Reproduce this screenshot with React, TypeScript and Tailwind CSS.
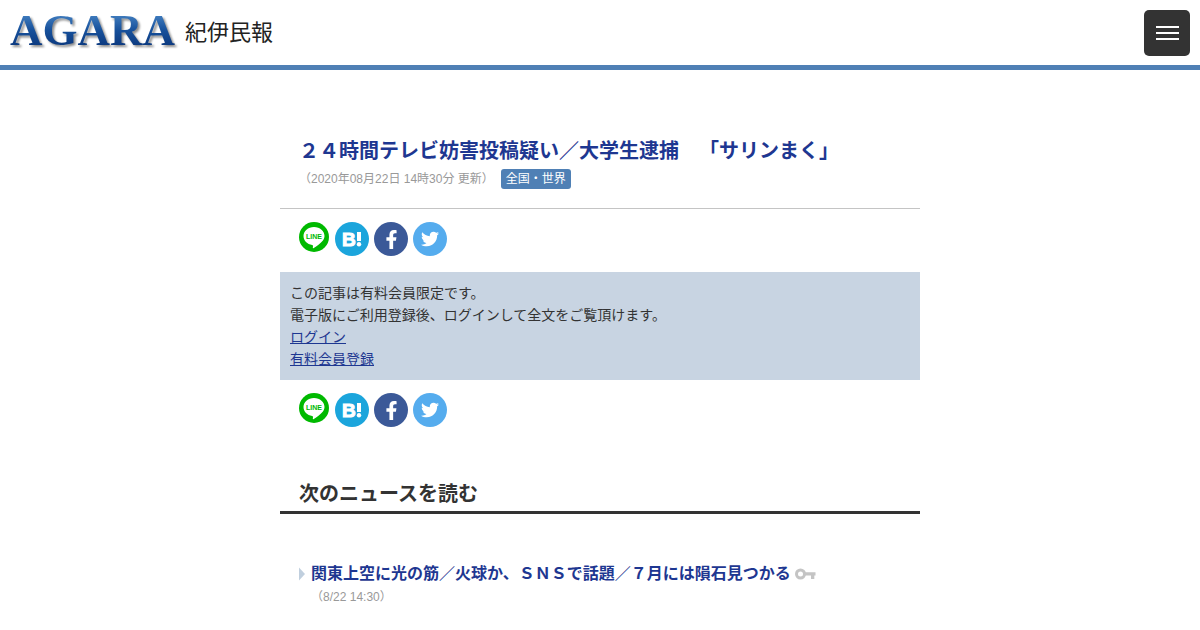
import React from 'react';
import { FaFacebookF, FaTwitter } from 'react-icons/fa';

const LineIcon = () => (
  <svg viewBox="0 0 30 30" className="size-[30px]" aria-hidden="true">
    <circle cx="15" cy="15" r="15" fill="#00b900" />
    <path
      d="M15 5C9 5 4.500 9 4.500 14c0 4.600 3.800 8.200 8.600 9 .8.2 1 .5.900 1.200l-.2 1.300c0 .6.3.9 1 .5 3-1.500 6.600-4.400 8.900-7.200 1.100-1.400 1.800-3 1.800-4.800 0-5-4.500-9-10.500-9z"
      fill="#fff"
    />
    <text x="15" y="16.500" textAnchor="middle" fontSize="7" fontWeight="700" fill="#00b900" fontFamily="Liberation Sans, sans-serif">
      LINE
    </text>
  </svg>
);

const HatenaIcon = () => (
  <svg viewBox="0 0 34 34" className="size-[34px]" aria-hidden="true">
    <circle cx="17" cy="17" r="17" fill="#1ba5dc" />
    <text x="7" y="24" fontSize="19" fontWeight="700" fill="#fff" stroke="#fff" strokeWidth="1" fontFamily="Liberation Sans, sans-serif">
      B
    </text>
    <rect x="22" y="10" width="4" height="9" fill="#fff" />
    <circle cx="24" cy="22.200" r="2.200" fill="#fff" />
  </svg>
);

const KeyIcon = () => (
  <svg viewBox="0 0 21 12" className="h-3 w-[21px] shrink-0" role="img" aria-label="有料会員限定">
    <circle cx="5.500" cy="6" r="4" fill="none" stroke="#c4c4c4" strokeWidth="3" />
    <path d="M10 4.300h10.500v3.200h-1.200v3.500h-3.300V7.500H10z" fill="#c4c4c4" />
  </svg>
);

const ShareButtons = () => (
  <ul className="flex items-start gap-[5px] px-[19px]">
    <li className="mr-px">
      <a href="#line" aria-label="LINEで送る" className="block">
        <LineIcon />
      </a>
    </li>
    <li>
      <a href="#hatena" aria-label="はてなブックマーク" className="block">
        <HatenaIcon />
      </a>
    </li>
    <li>
      <a href="#facebook" aria-label="Facebookでシェア" className="flex size-[34px] items-center justify-center rounded-full bg-[#3b5998] text-white">
        <FaFacebookF size={19} />
      </a>
    </li>
    <li>
      <a href="#twitter" aria-label="Twitterでシェア" className="flex size-[34px] items-center justify-center rounded-full bg-[#55acee] text-white">
        <FaTwitter size={18} />
      </a>
    </li>
  </ul>
);

const newsList = [
  { title: '関東上空に光の筋／火球か、ＳＮＳで話題／７月には隕石見つかる', date: '8/22 14:30', locked: true },
];

export default function App() {
  return (
    <div className="bg-white font-['Liberation_Sans','Noto_Sans_CJK_JP',sans-serif] text-sm text-[#333] [text-spacing-trim:space-all]">
      {/* Header */}
      <header className="flex items-start justify-between border-b-[5px] border-[#4f80b5] px-2.5 pt-2.5 pb-[9px]">
        <a href="/" className="flex items-start gap-2.5">
          <span className="bg-linear-to-b from-[#4d8bc9] via-[#17519c] to-[#0a3478] bg-clip-text font-['Liberation_Serif',serif] text-[45px] leading-10 font-bold text-transparent drop-shadow-[2px_2px_1px_rgba(0,0,0,0.45)]">
            AGARA
          </span>
          <span className="text-[22px] leading-[46px] text-[#222]">紀伊民報</span>
        </a>
        <button type="button" aria-label="メニュー" className="flex size-[46px] flex-col items-center justify-center gap-1 rounded-[5px] bg-[#333]">
          <span className="h-0.5 w-[23px] bg-white" />
          <span className="h-0.5 w-[23px] bg-white" />
          <span className="h-0.5 w-[23px] bg-white" />
        </button>
      </header>

      <main className="mx-auto max-w-[640px] pt-16">
        {/* Article */}
        <article>
          <div className="border-b border-[#c4c4c4] px-[19px] pb-[19px]">
            <h1 className="pt-px text-xl leading-8 font-bold text-[#1e3791]">２４時間テレビ妨害投稿疑い／大学生逮捕　「サリンまく」</h1>
            <div className="mt-0.5 flex items-center gap-[7px] text-xs leading-5">
              <time className="text-[#999]">（2020年08月22日 14時30分 更新）</time>
              <a href="#world" className="rounded-[3px] bg-[#4f80b5] px-[5px] text-white">全国・世界</a>
            </div>
          </div>

          <div className="pt-[13px] pb-4">
            <ShareButtons />
          </div>

          <div className="bg-[#c8d4e2] p-2.5 leading-[22px]">
            <p>この記事は有料会員限定です。</p>
            <p>電子版にご利用登録後、ログインして全文をご覧頂けます。</p>
            <p>
              <a href="#login" className="text-[#1e3791] underline">ログイン</a>
            </p>
            <p>
              <a href="#register" className="text-[#1e3791] underline">有料会員登録</a>
            </p>
          </div>

          <div className="pt-[13px]">
            <ShareButtons />
          </div>
        </article>

        {/* Next news */}
        <section className="pt-[51px]">
          <h2 className="border-b-[3px] border-[#333] px-[19px] pb-px text-xl leading-8 font-bold">次のニュースを読む</h2>
          <ul className="px-[19px] pt-12">
            {newsList.map((news) => (
              <li key={news.title} className="flex items-start">
                <svg viewBox="0 0 12 24" className="h-6 w-3 shrink-0" aria-hidden="true">
                  <path d="M0 5.500l6 6.500-6 6.500z" fill="#c0cfde" />
                </svg>
                <div>
                  <a href="#news" className="flex items-center gap-1 text-base leading-6 font-bold text-[#1e3791]">
                    {news.title}
                    {news.locked && <KeyIcon />}
                  </a>
                  <time className="block text-xs leading-[22px] text-[#999]">（{news.date}）</time>
                </div>
              </li>
            ))}
          </ul>
        </section>
      </main>
    </div>
  );
}
